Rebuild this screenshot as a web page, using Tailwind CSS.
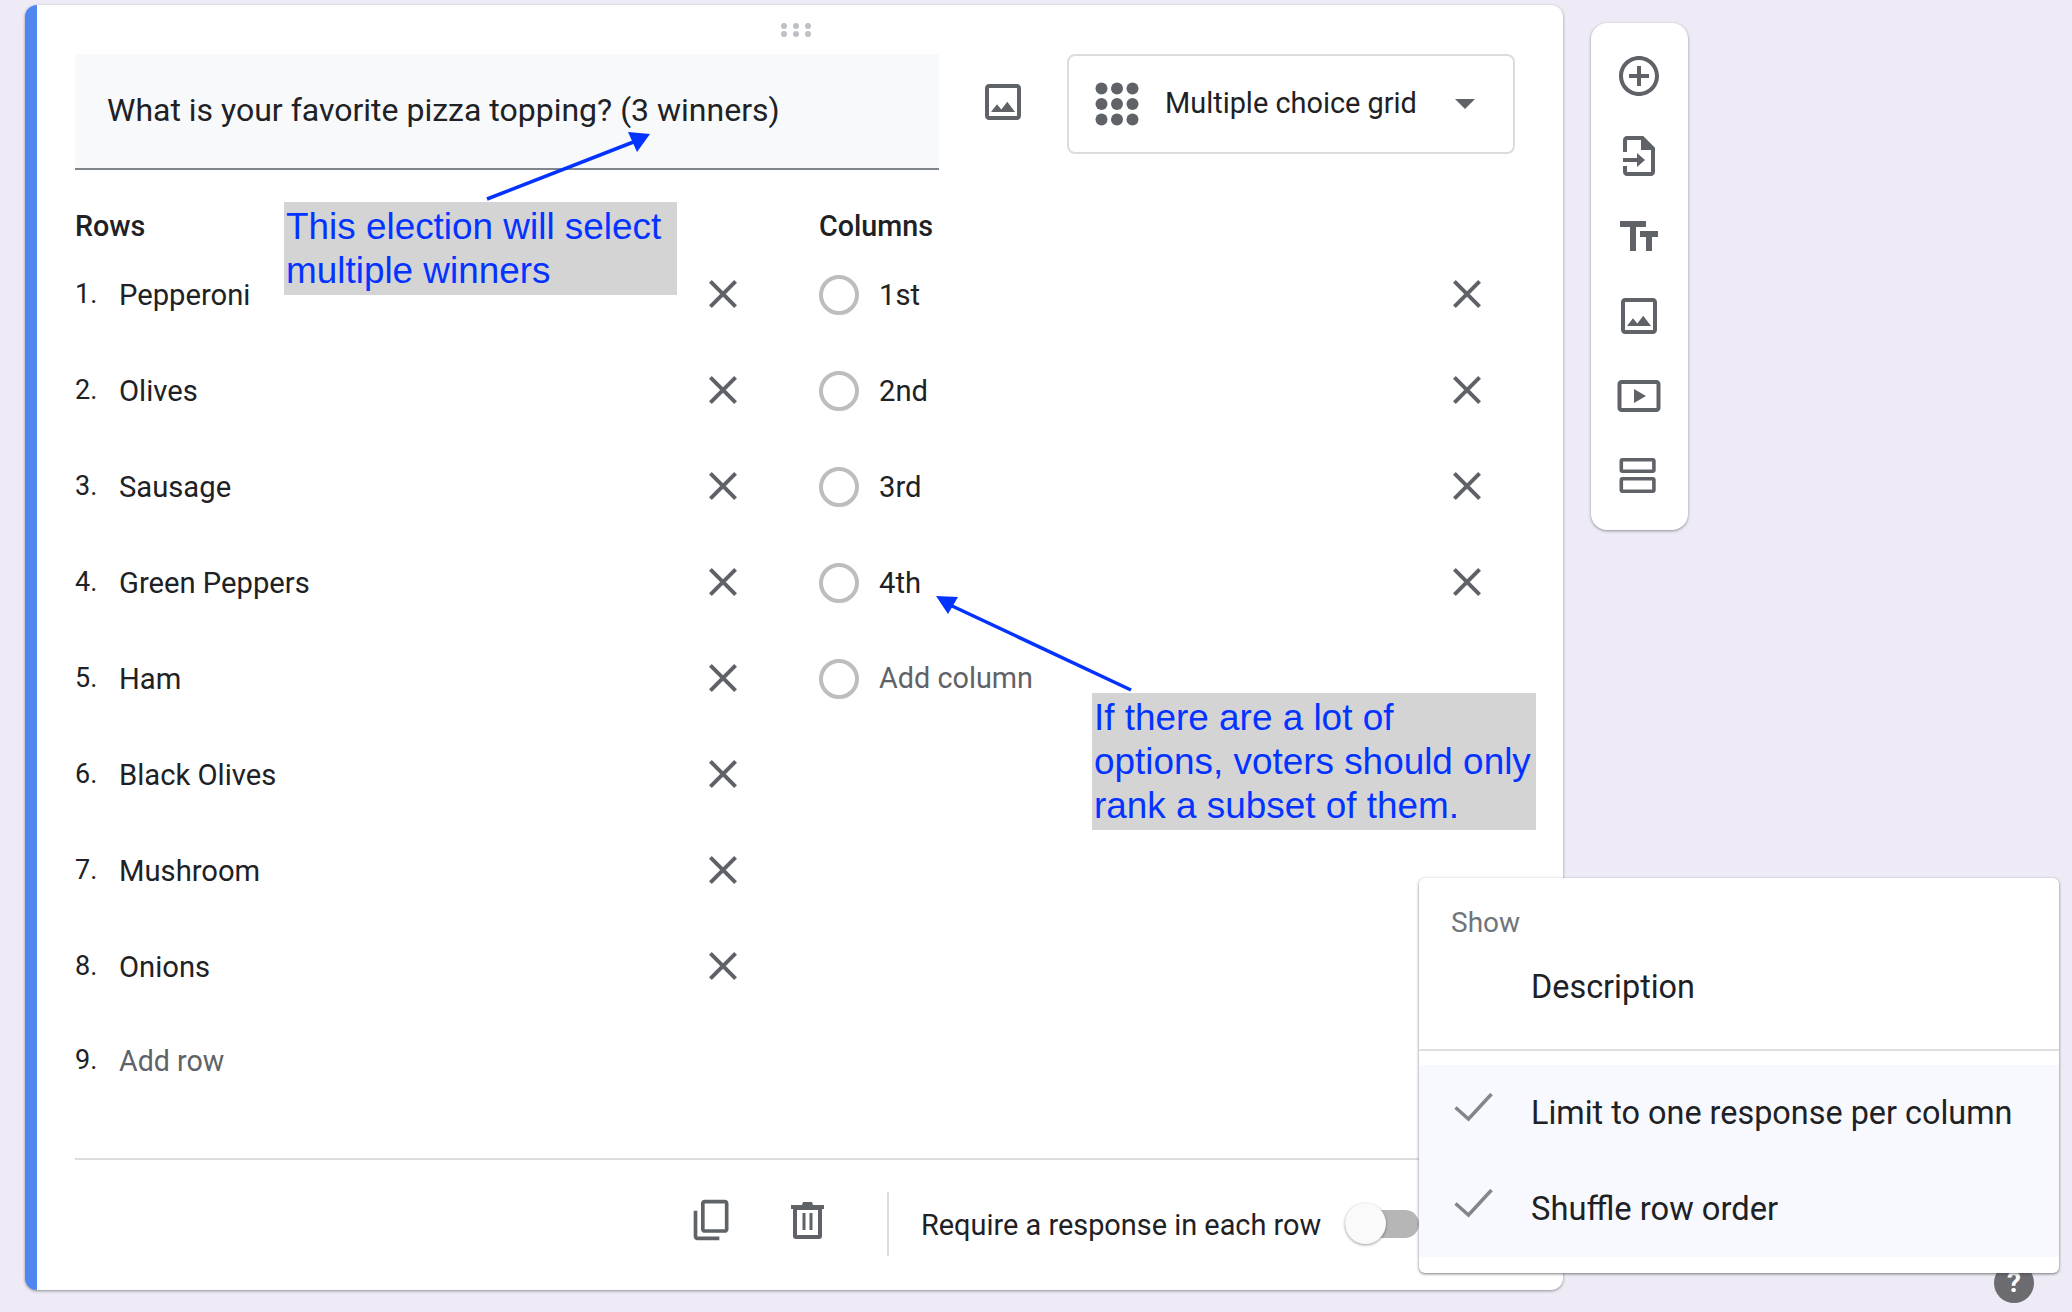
<!DOCTYPE html>
<html lang="en">
<head>
    <meta charset="UTF-8">
    <title>Multiple choice grid</title>
    <script src="https://cdn.jsdelivr.net/npm/@tailwindcss/browser@4"></script>
</head>
<body class="bg-[#eeebf6]">
<div class="relative h-[1312px] w-[2072px] overflow-hidden font-['Roboto',sans-serif] text-[#202124]">
    <div class="flex items-start gap-[28px] pl-[25px] pt-[5px]">
        <!-- Question card -->
        <div class="relative h-[1285px] w-[1538px] rounded-[12px] border-l-[12px] border-[#4f87ee] bg-white pl-[38px] shadow-[0_1px_3px_rgba(60,64,67,.55)]">
            <!-- drag handle -->
            <svg class="absolute left-[743px] top-[17px]" width="32" height="16" viewBox="0 0 32 16" fill="#bdc1c6">
                <circle cx="4" cy="4" r="3"/><circle cx="16" cy="4" r="3"/><circle cx="28" cy="4" r="3"/>
                <circle cx="4" cy="12" r="3"/><circle cx="16" cy="12" r="3"/><circle cx="28" cy="12" r="3"/>
            </svg>

            <!-- Header -->
            <div class="flex items-start pt-[49px]">
                <div class="flex h-[116px] w-[864px] items-center border-b-2 border-[#80868b] bg-[#f8f9fa] pb-[3px] pl-[32px] text-[32px]">What is your favorite pizza topping? (3 winners)</div>
                <svg class="ml-[40px] mt-[24px]" width="48" height="48" viewBox="0 0 24 24" fill="#5f6368"><path d="M19 5v14H5V5h14m0-2H5c-1.100 0-2 .9-2 2v14c0 1.100.9 2 2 2h14c1.100 0 2-.9 2-2V5c0-1.100-.9-2-2-2zm-4.860 8.860l-3 3.870L9 13.140 6 17h12l-3.860-5.140z"/></svg>
                <div class="ml-[40px] flex h-[100px] w-[448px] items-center rounded-[8px] border-2 border-[#dadce0] pl-[26px]">
                    <svg width="44" height="44" viewBox="0 0 44 44" fill="#5f6368">
                        <circle cx="6.500" cy="6.500" r="6"/><circle cx="22" cy="6.500" r="6"/><circle cx="37.500" cy="6.500" r="6"/>
                        <circle cx="6.500" cy="22" r="6"/><circle cx="22" cy="22" r="6"/><circle cx="37.500" cy="22" r="6"/>
                        <circle cx="6.500" cy="37.500" r="6"/><circle cx="22" cy="37.500" r="6"/><circle cx="37.500" cy="37.500" r="6"/>
                    </svg>
                    <span class="ml-[26px] text-[28.9px]">Multiple choice grid</span>
                    <svg class="ml-[38px]" width="20" height="10" viewBox="0 0 20 10" fill="#5f6368"><path d="M0 0h20L10 10z"/></svg>
                </div>
            </div>

            <!-- Rows and columns -->
            <div class="mt-[39px] flex">
                <div class="w-[744px]">
                    <div class="mb-[4px] h-[34px] text-[28.7px] leading-[34px] font-medium">Rows</div>
                    <div class="flex h-[96px] w-[672px] items-center"><span class="w-[44px] pb-[1px] text-[27px]">1.</span><span class="flex-1 pt-[1px] text-[29.2px]">Pepperoni</span><svg class="mb-[2px]" width="48" height="48" viewBox="0 0 24 24" fill="#5f6368"><path d="M19 6.410L17.590 5 12 10.590 6.410 5 5 6.410 10.590 12 5 17.590 6.410 19 12 13.410 17.590 19 19 17.590 13.410 12z"/></svg></div>
                    <div class="flex h-[96px] w-[672px] items-center"><span class="w-[44px] pb-[1px] text-[27px]">2.</span><span class="flex-1 pt-[1px] text-[29.2px]">Olives</span><svg class="mb-[2px]" width="48" height="48" viewBox="0 0 24 24" fill="#5f6368"><path d="M19 6.410L17.590 5 12 10.590 6.410 5 5 6.410 10.590 12 5 17.590 6.410 19 12 13.410 17.590 19 19 17.590 13.410 12z"/></svg></div>
                    <div class="flex h-[96px] w-[672px] items-center"><span class="w-[44px] pb-[1px] text-[27px]">3.</span><span class="flex-1 pt-[1px] text-[29.2px]">Sausage</span><svg class="mb-[2px]" width="48" height="48" viewBox="0 0 24 24" fill="#5f6368"><path d="M19 6.410L17.590 5 12 10.590 6.410 5 5 6.410 10.590 12 5 17.590 6.410 19 12 13.410 17.590 19 19 17.590 13.410 12z"/></svg></div>
                    <div class="flex h-[96px] w-[672px] items-center"><span class="w-[44px] pb-[1px] text-[27px]">4.</span><span class="flex-1 pt-[1px] text-[29.2px]">Green Peppers</span><svg class="mb-[2px]" width="48" height="48" viewBox="0 0 24 24" fill="#5f6368"><path d="M19 6.410L17.590 5 12 10.590 6.410 5 5 6.410 10.590 12 5 17.590 6.410 19 12 13.410 17.590 19 19 17.590 13.410 12z"/></svg></div>
                    <div class="flex h-[96px] w-[672px] items-center"><span class="w-[44px] pb-[1px] text-[27px]">5.</span><span class="flex-1 pt-[1px] text-[29.2px]">Ham</span><svg class="mb-[2px]" width="48" height="48" viewBox="0 0 24 24" fill="#5f6368"><path d="M19 6.410L17.590 5 12 10.590 6.410 5 5 6.410 10.590 12 5 17.590 6.410 19 12 13.410 17.590 19 19 17.590 13.410 12z"/></svg></div>
                    <div class="flex h-[96px] w-[672px] items-center"><span class="w-[44px] pb-[1px] text-[27px]">6.</span><span class="flex-1 pt-[1px] text-[29.2px]">Black Olives</span><svg class="mb-[2px]" width="48" height="48" viewBox="0 0 24 24" fill="#5f6368"><path d="M19 6.410L17.590 5 12 10.590 6.410 5 5 6.410 10.590 12 5 17.590 6.410 19 12 13.410 17.590 19 19 17.590 13.410 12z"/></svg></div>
                    <div class="flex h-[96px] w-[672px] items-center"><span class="w-[44px] pb-[1px] text-[27px]">7.</span><span class="flex-1 pt-[1px] text-[29.2px]">Mushroom</span><svg class="mb-[2px]" width="48" height="48" viewBox="0 0 24 24" fill="#5f6368"><path d="M19 6.410L17.590 5 12 10.590 6.410 5 5 6.410 10.590 12 5 17.590 6.410 19 12 13.410 17.590 19 19 17.590 13.410 12z"/></svg></div>
                    <div class="flex h-[96px] w-[672px] items-center"><span class="w-[44px] pb-[1px] text-[27px]">8.</span><span class="flex-1 pt-[1px] text-[29.2px]">Onions</span><svg class="mb-[2px]" width="48" height="48" viewBox="0 0 24 24" fill="#5f6368"><path d="M19 6.410L17.590 5 12 10.590 6.410 5 5 6.410 10.590 12 5 17.590 6.410 19 12 13.410 17.590 19 19 17.590 13.410 12z"/></svg></div>
                    <div class="flex h-[96px] w-[672px] -translate-y-[2px] items-center"><span class="w-[44px] pb-[1px] text-[27px]">9.</span><span class="flex-1 pt-[1px] text-[28.6px] text-[#5f6368]">Add row</span></div>
                </div>
                <div class="w-[672px]">
                    <div class="mb-[4px] h-[34px] text-[28.7px] leading-[34px] font-medium">Columns</div>
                    <div class="flex h-[96px] items-center"><span class="size-[40px] rounded-full border-4 border-[#bdbdbd]"></span><span class="ml-[20px] flex-1 pt-[1px] text-[29.2px]">1st</span><svg class="mb-[2px]" width="48" height="48" viewBox="0 0 24 24" fill="#5f6368"><path d="M19 6.410L17.590 5 12 10.590 6.410 5 5 6.410 10.590 12 5 17.590 6.410 19 12 13.410 17.590 19 19 17.590 13.410 12z"/></svg></div>
                    <div class="flex h-[96px] items-center"><span class="size-[40px] rounded-full border-4 border-[#bdbdbd]"></span><span class="ml-[20px] flex-1 pt-[1px] text-[29.2px]">2nd</span><svg class="mb-[2px]" width="48" height="48" viewBox="0 0 24 24" fill="#5f6368"><path d="M19 6.410L17.590 5 12 10.590 6.410 5 5 6.410 10.590 12 5 17.590 6.410 19 12 13.410 17.590 19 19 17.590 13.410 12z"/></svg></div>
                    <div class="flex h-[96px] items-center"><span class="size-[40px] rounded-full border-4 border-[#bdbdbd]"></span><span class="ml-[20px] flex-1 pt-[1px] text-[29.2px]">3rd</span><svg class="mb-[2px]" width="48" height="48" viewBox="0 0 24 24" fill="#5f6368"><path d="M19 6.410L17.590 5 12 10.590 6.410 5 5 6.410 10.590 12 5 17.590 6.410 19 12 13.410 17.590 19 19 17.590 13.410 12z"/></svg></div>
                    <div class="flex h-[96px] items-center"><span class="size-[40px] rounded-full border-4 border-[#bdbdbd]"></span><span class="ml-[20px] flex-1 pt-[1px] text-[29.2px]">4th</span><svg class="mb-[2px]" width="48" height="48" viewBox="0 0 24 24" fill="#5f6368"><path d="M19 6.410L17.590 5 12 10.590 6.410 5 5 6.410 10.590 12 5 17.590 6.410 19 12 13.410 17.590 19 19 17.590 13.410 12z"/></svg></div>
                    <div class="flex h-[96px] items-center"><span class="size-[40px] rounded-full border-4 border-[#bdbdbd]"></span><span class="ml-[20px] flex-1 text-[28.8px] text-[#5f6368]">Add column</span></div>
                </div>
            </div>

            <!-- Footer -->
            <div class="mt-[47px] flex h-[130px] w-[1395px] items-center border-t-2 border-[#dadce0] pl-[615px]">
                <svg class="mb-[8px] -scale-y-100" width="44" height="44" viewBox="0 0 24 24" fill="#5f6368"><path d="M16 1H4c-1.100 0-2 .9-2 2v14h2V3h12V1zm3 4H8c-1.100 0-2 .9-2 2v14c0 1.100.9 2 2 2h11c1.100 0 2-.9 2-2V7c0-1.100-.9-2-2-2zm0 16H8V7h11v14z"/></svg>
                <svg class="mb-[8px] ml-[57px]" width="33" height="37" viewBox="0 0 33 37" fill="#5f6368">
                    <path d="M0 3h11l1-3h9l1 3h11v4H0z"/>
                    <path fill-rule="evenodd" d="M2 7h29v27a3 3 0 0 1-3 3H5a3 3 0 0 1-3-3zm4 1v25h21V8z"/>
                    <rect x="11.500" y="11" width="3" height="17"/><rect x="18.500" y="11" width="3" height="17"/>
                </svg>
                <div class="ml-[63px] h-[64px] w-[2px] bg-[#dadce0]"></div>
                <span class="ml-[32px] pt-[3px] text-[28.9px]">Require a response in each row</span>
                <div class="relative ml-[24px] h-[28px] w-[74px] rounded-full bg-[#b6b6b6]">
                    <div class="absolute left-0 top-[-7px] size-[41px] rounded-full bg-[#fafafa] shadow-[0_1px_3px_rgba(0,0,0,.4)]"></div>
                </div>
            </div>
        </div>

        <!-- Side toolbar -->
        <div class="mt-[18px] flex h-[507px] w-[97px] flex-col items-center gap-[32px] rounded-[16px] bg-white pr-[2px] pt-[29px] shadow-[0_1px_3px_rgba(60,64,67,.55)]">
            <svg width="48" height="48" viewBox="0 0 24 24" fill="#5f6368"><path d="M13 7h-2v4H7v2h4v4h2v-4h4v-2h-4V7zm-1-5C6.480 2 2 6.480 2 12s4.480 10 10 10 10-4.480 10-10S17.520 2 12 2zm0 18c-4.410 0-8-3.590-8-8s3.590-8 8-8 8 3.590 8 8-3.590 8-8 8z"/></svg>
            <svg width="48" height="48" viewBox="0 0 24 24" fill="#5f6368"><path d="M14 2H6c-1.100 0-2 .9-2 2v6h2V4h7v5h5v11H6v-3H4v3c0 1.100.9 2 2 2h12c1.100 0 2-.9 2-2V8l-6-6z"/><path d="M14 2l6 6h-6z"/><path d="M4 13h7v-2.500l4 3.500-4 3.500V15H4z"/></svg>
            <svg class="translate-y-[1px]" width="48" height="48" viewBox="0 0 24 24" fill="#5f6368"><path d="M2.500 4v3h5v12h3V7h5V4h-13zm19 5h-9v3h3v7h3v-7h3V9z"/></svg>
            <svg width="48" height="48" viewBox="0 0 24 24" fill="#5f6368"><path d="M19 5v14H5V5h14m0-2H5c-1.100 0-2 .9-2 2v14c0 1.100.9 2 2 2h14c1.100 0 2-.9 2-2V5c0-1.100-.9-2-2-2zm-4.860 8.860l-3 3.870L9 13.140 6 17h12l-3.860-5.140z"/></svg>
            <svg width="48" height="48" viewBox="0 0 24 24" fill="#5f6368"><path fill-rule="evenodd" d="M3.250 4h17.500c1.100 0 2 .9 2 2v12c0 1.100-.9 2-2 2H3.250c-1.100 0-2-.9-2-2V6c0-1.100.9-2 2-2zm0 2v12h17.500V6H3.250zm6.250 2.500v7l6-3.500-6-3.500z"/></svg>
            <svg class="-translate-y-[1px]" width="48" height="48" viewBox="0 0 24 24" fill="none" stroke="#5f6368" stroke-width="1.800"><rect x="3.150" y="4.400" width="16.300" height="5.700" rx=".6"/><rect x="3.150" y="13.900" width="16.300" height="6.200" rx=".6"/></svg>
        </div>
    </div>

    <!-- Annotations drawn over the form -->
    <svg class="absolute left-0 top-0" width="2072" height="1312" fill="#0433ff" stroke="#0433ff">
        <line x1="487" y1="199" x2="636" y2="141" stroke-width="3.500"/>
        <path d="M650 134L628 132L637 152z" stroke="none"/>
        <line x1="1131" y1="690" x2="950" y2="605" stroke-width="3.500"/>
        <path d="M936 596L958 597L948 614z" stroke="none"/>
    </svg>
    <div class="absolute left-[284px] top-[202px] h-[93px] w-[393px] whitespace-nowrap bg-[#d4d4d4] pl-[2px] pt-[3px] font-['Liberation_Sans',sans-serif] text-[36.9px] leading-[44px] text-[#0433ff]">This election will select<br>multiple winners</div>
    <div class="absolute left-[1092px] top-[693px] h-[137px] w-[444px] whitespace-nowrap bg-[#d4d4d4] pl-[2px] pt-[3px] font-['Liberation_Sans',sans-serif] text-[36.9px] leading-[44px] text-[#0433ff]">If there are a lot of<br>options, voters should only<br>rank a subset of them.</div>

    <!-- Help button, partly behind the menu -->
    <div class="absolute left-[1994px] top-[1263px] flex size-[40px] items-center justify-center rounded-full bg-[#6b6b70] text-[28px] font-bold text-white">?</div>

    <!-- Show menu -->
    <div class="absolute left-[1419px] top-[878px] h-[395px] w-[640px] rounded-[6px] bg-white shadow-[0_1px_3px_rgba(60,64,67,.7)]">
        <div class="h-[62px] pl-[32px] pt-[27px] text-[28px] leading-[36px] text-[#70757a]">Show</div>
        <div class="h-[111px] border-b-2 border-[#e0e0e0] pl-[112px] pt-[23px] text-[32.4px] leading-[48px]">Description</div>
        <div class="mt-[14px] bg-[#f7f9fe]">
            <div class="flex h-[96px] items-center text-[32.4px]">
                <svg class="ml-[32px] w-[48px]" width="48" height="40" viewBox="0 0 48 40" fill="none" stroke="#80868b" stroke-width="3.500"><path d="M4.500 14.500L17.500 26L40.500 1"/></svg>
                <span class="ml-[32px]">Limit to one response per column</span>
            </div>
            <div class="flex h-[96px] items-center text-[32.7px]">
                <svg class="ml-[32px] w-[48px]" width="48" height="40" viewBox="0 0 48 40" fill="none" stroke="#80868b" stroke-width="3.500"><path d="M4.500 14.500L17.500 26L40.500 1"/></svg>
                <span class="ml-[32px] pt-[1px]">Shuffle row order</span>
            </div>
        </div>
    </div>
</div>
</body>
</html>
